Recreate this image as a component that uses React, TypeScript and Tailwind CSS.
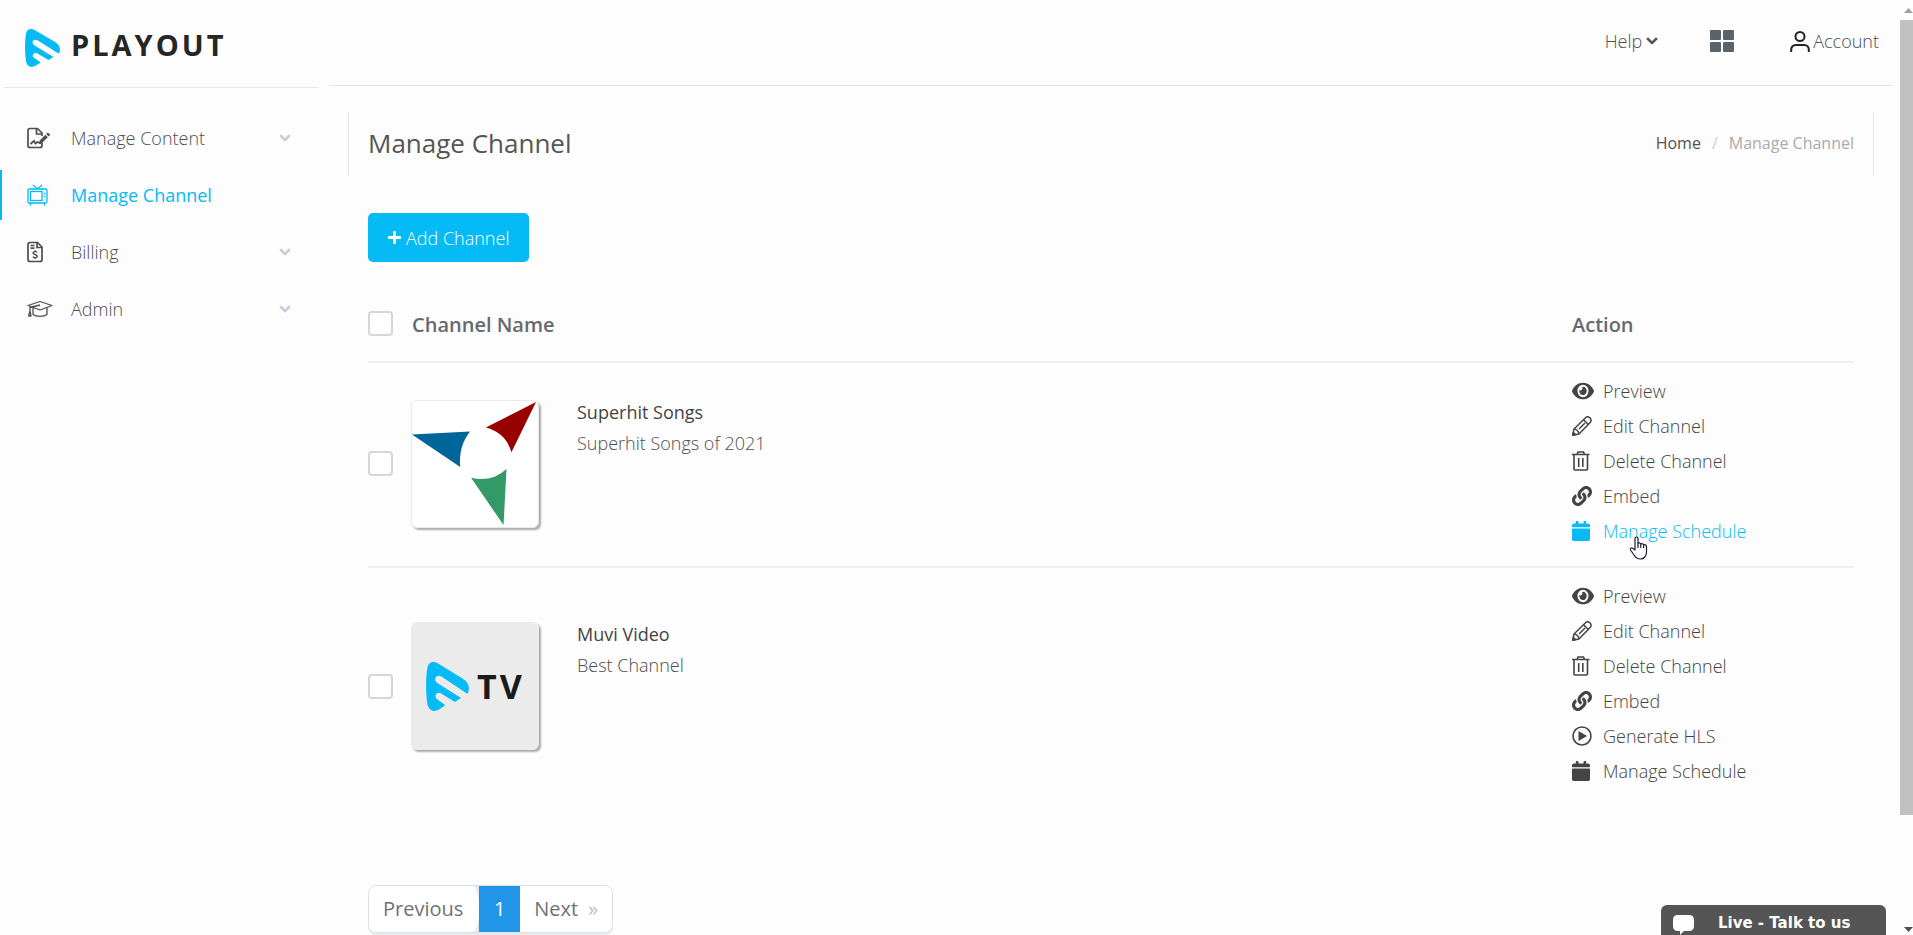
import { ChevronDown } from 'lucide-react'
import type { ReactNode } from 'react'
import { FaCalendar, FaChevronDown, FaEye, FaLink, FaPlus } from 'react-icons/fa'

type IconProps = { className?: string }

type Channel = {
  name: string
  description: string
  logo: ReactNode
  hls: boolean
  active?: string
}

function BrandMark({ className }: IconProps) {
  return (
    <svg className={className} viewBox="0 0 35 38" preserveAspectRatio="none" aria-hidden>
      <path
        d="M1.2 4C2.5-.5 6.500-.8 10.500 1.500L30 13C35 16 36 20 34 24.500L33 24.300 12.500 11.300C8.500 9 5.500 13.500 9.200 16.200L28.500 28 23.500 31 12 24.300C8.500 22.500 6 27 9.300 29L15.800 33.500 10.500 36.800C6.500 39 2.500 38 1.200 33 -.3 25-.3 11 1.200 4Z"
        fill="#05baf5"
      />
    </svg>
  )
}

function ContentIcon({ className }: IconProps) {
  return (
    <svg className={className} viewBox="0 0 24 22" fill="none" stroke="currentColor" strokeWidth="1.700" aria-hidden>
      <path d="M15 15.500V18.500a2 2 0 0 1-2 2H3a2 2 0 0 1-2-2V3.500a2 2 0 0 1 2-2H10.500L15 6V9" />
      <path d="M9.500 1.500V7H15" />
      <path d="M3.500 17 7 13.800 8.500 16.500 10.500 15 14 16.500" />
      <path d="M11.800 17 12.800 13.500 18.300 7.800 20.800 10.200 15.200 15.800Z" fill="currentColor" stroke="none" />
      <path d="M19.200 7 20.800 5.500 23.300 7.800 21.700 9.400Z" fill="currentColor" stroke="none" />
    </svg>
  )
}

function TvIcon({ className }: IconProps) {
  return (
    <svg className={className} viewBox="0 0 24 22" fill="none" stroke="currentColor" strokeWidth="1.300" aria-hidden>
      <rect x="1" y="5" width="19" height="14" rx="1.500" />
      <rect x="3.500" y="7.500" width="11.500" height="9" />
      <path d="M6 1 10.500 5 15 1M3.500 19V21.500M17.500 19V21.500M17 9.500h1.500M17 12.500h1.500" />
    </svg>
  )
}

function BillingIcon({ className }: IconProps) {
  return (
    <svg className={className} viewBox="0 0 24 22" fill="none" stroke="currentColor" strokeWidth="1.700" aria-hidden>
      <path d="M3 1.500H10.500L15 6V18.500a2 2 0 0 1-2 2H3a2 2 0 0 1-2-2V3.500a2 2 0 0 1 2-2Z" />
      <path d="M10 1.500V6.500H15M3.500 4.500H7.500M3.500 7.200H7.500" />
      <path
        d="M10.200 11.300C9 10.300 6 10.300 6 12S10.300 13.300 10.300 15.200 7 16.900 5.800 15.700M8 9.300V10.700M8 16.500V18"
        strokeWidth="1.400"
      />
    </svg>
  )
}

function AdminIcon({ className }: IconProps) {
  return (
    <svg
      className={className}
      viewBox="0 0 26 18"
      fill="none"
      stroke="currentColor"
      strokeWidth="1.300"
      strokeLinejoin="round"
      aria-hidden
    >
      <path d="M1 5.500 13 1.500 25 5.500 13 10 1 5.500Z" />
      <path d="M6 7.500V14.500C9 17 17 17 20 14.500V7.500M13 5 3 7.500V11M3 11 1.500 16H4Z" />
    </svg>
  )
}

function UserIcon({ className }: IconProps) {
  return (
    <svg className={className} viewBox="0 0 20 21" fill="none" stroke="#222" strokeWidth="2" aria-hidden>
      <circle cx="10" cy="5.500" r="4.500" />
      <path d="M1.200 21V18.500a4.500 4.500 0 0 1 4.500-4.500H14.300a4.500 4.500 0 0 1 4.500 4.500V21" />
    </svg>
  )
}

function TrashIcon({ className }: IconProps) {
  return (
    <svg className={className} viewBox="0 0 18 20" fill="none" stroke="currentColor" strokeWidth="1.600" aria-hidden>
      <path d="M0 3.500H17.500M5 3.500 6 1H11.500L12.500 3.500M2 3.500V18a1 1 0 0 0 1 1H14.500a1 1 0 0 0 1-1V3.500M6.700 7V16M10.800 7V16" />
    </svg>
  )
}

function HlsIcon({ className }: IconProps) {
  return (
    <svg className={className} viewBox="0 0 20 20" aria-hidden>
      <circle cx="10" cy="10" r="9" fill="none" stroke="currentColor" strokeWidth="1.600" />
      <path d="M6.500 5 15 10 6.500 15Z" fill="currentColor" />
    </svg>
  )
}

function PencilIcon({ className }: IconProps) {
  return (
    <svg
      className={className}
      viewBox="0 0 20 20"
      fill="none"
      stroke="currentColor"
      strokeWidth="1.500"
      strokeLinejoin="round"
      aria-hidden
    >
      <path d="M.8 19.200 2 13 13.500 1.700C15 .3 16.500.5 17.800 1.800S19.500 5 18.200 6.400L7 18 .8 19.200Z" />
      <path d="M2 13C4 12.800 7 15.500 7 18M11.500 3.700 16.300 8.500M7 13 13 7" />
      <path d="M.8 19.200 1.400 16.500 3.500 18.600Z" fill="currentColor" />
    </svg>
  )
}

function HandCursor() {
  return (
    <svg
      className="pointer-events-none absolute top-[23px] left-[57px] h-6 w-[19px]"
      viewBox="0 0 19 24"
      fill="#fff"
      stroke="#1c1c2c"
      strokeWidth="1.200"
      strokeLinejoin="round"
      aria-hidden
    >
      <path d="M6 14V2.500a1.500 1.500 0 0 1 3 0V7.500C10 6.500 11.500 7 11.800 8 13 7.300 14.300 7.700 14.600 8.900 16 8.300 17.500 9 17.500 10.500V16C17.500 20 15 23 11.500 23 8 23 6.500 21.500 5 19L1.500 14C.8 12.500 2.500 11.300 4 12.500Z" />
      <path d="M9 7.500V12M11.800 8V12M14.600 9V12" fill="none" />
    </svg>
  )
}

function StarLogo() {
  return (
    <svg className="size-full" viewBox="0 0 128 128" aria-hidden>
      <path d="M126 1 75 27Q95 32 101 52Z" fill="#900" />
      <path d="M0 34 59 31Q47 46 49 67Z" fill="#069" />
      <path d="M60 78Q81 83 96 69L93 126Z" fill="#396" />
    </svg>
  )
}

function TvLogo() {
  return (
    <div className="flex size-full items-center gap-2 bg-[#ebebeb] pl-[14px]">
      <BrandMark className="h-[49px] w-[43px] shrink-0" />
      <span className="text-[34px] font-bold tracking-[3px] text-[#1a1a1a]">TV</span>
    </div>
  )
}

const menu = [
  { label: 'Manage Content', Icon: ContentIcon, expandable: true, active: false },
  { label: 'Manage Channel', Icon: TvIcon, expandable: false, active: true },
  { label: 'Billing', Icon: BillingIcon, expandable: true, active: false },
  { label: 'Admin', Icon: AdminIcon, expandable: true, active: false },
]

const actions = [
  { label: 'Preview', Icon: FaEye, size: 'size-[22px]' },
  { label: 'Edit Channel', Icon: PencilIcon, size: 'size-5' },
  { label: 'Delete Channel', Icon: TrashIcon, size: 'h-5 w-[18px]' },
  { label: 'Embed', Icon: FaLink, size: 'size-5' },
  { label: 'Generate HLS', Icon: HlsIcon, size: 'size-5' },
  { label: 'Manage Schedule', Icon: FaCalendar, size: 'h-5 w-[18px]' },
]

const channels: Channel[] = [
  {
    name: 'Superhit Songs',
    description: 'Superhit Songs of 2021',
    logo: <StarLogo />,
    hls: false,
    active: 'Manage Schedule',
  },
  { name: 'Muvi Video', description: 'Best Channel', logo: <TvLogo />, hls: true },
]

function Checkbox({ label }: { label: string }) {
  return (
    <input
      type="checkbox"
      aria-label={label}
      className="block size-[25px] appearance-none rounded border-2 border-[#d6d6d6] bg-white checked:bg-[#05baf5]"
    />
  )
}

function Sidebar() {
  return (
    <aside className="w-[329px] shrink-0">
      <div className="mr-[10px] ml-1 flex h-[88px] items-center gap-[11px] border-b border-[#e9e9e9] pt-[2px] pl-[21px]">
        <BrandMark className="mt-[6px] h-[38px] w-[35px]" />
        <span className="text-[29px] leading-10 font-bold tracking-[3px] text-[#262626]">PLAYOUT</span>
      </div>
      <nav className="mt-[25px] flex flex-col gap-[7px]">
        {menu.map(({ label, Icon, expandable, active }) => (
          <a
            key={label}
            href="#"
            className={`flex h-[50px] items-center border-l-2 pr-9 pl-[25px] ${
              active ? 'border-[#05baf5] font-medium text-[#05baf5]' : 'border-transparent font-light text-[#4c4e52]'
            }`}
          >
            <span className="w-11 shrink-0">
              <Icon className={label === 'Admin' ? 'h-[18px] w-[26px]' : 'h-[22px] w-6'} />
            </span>
            <span className="flex-1">{label}</span>
            {expandable ? <ChevronDown className="size-4 text-[#c5d0dd]" strokeWidth={4} aria-hidden /> : null}
          </a>
        ))}
      </nav>
    </aside>
  )
}

function TopBar() {
  return (
    <header className="mr-[7px] flex h-[86px] items-center justify-end border-b border-[#e9e9e9] pr-[14px] pb-1 font-light text-[#4c4e52]">
      <button type="button" className="flex items-center gap-1">
        Help
        <FaChevronDown className="size-3" stroke="currentColor" strokeWidth={40} aria-hidden />
      </button>
      <button type="button" aria-label="Apps" className="ml-[52px] grid grid-cols-2 gap-[2px] text-[#58636a]">
        <span className="h-[10px] w-[11px] rounded-[1px] bg-current" />
        <span className="h-[10px] w-[11px] rounded-[1px] bg-current" />
        <span className="h-[10px] w-[11px] rounded-[1px] bg-current" />
        <span className="h-[10px] w-[11px] rounded-[1px] bg-current" />
      </button>
      <button type="button" className="ml-14 flex items-center gap-[3px]">
        <UserIcon className="mt-[2px] h-[21px] w-5" />
        Account
      </button>
    </header>
  )
}

function ChannelRow({ channel }: { channel: Channel }) {
  const items = actions.filter((action) => channel.hls || action.label !== 'Generate HLS')

  return (
    <tr className="border-t-2 border-[#f0f0f0]">
      <td className="w-[43px] pb-[2px] align-middle">
        <Checkbox label={`Select ${channel.name}`} />
      </td>
      <td className="pb-[2px] align-middle">
        <div className="flex gap-[38px]">
          <div className="size-32 shrink-0 overflow-hidden rounded-md border border-[#e9e9e9] bg-white shadow-[2px_2px_2px_#aaa]">
            {channel.logo}
          </div>
          <div>
            <p className="leading-6 font-medium text-[#444]">{channel.name}</p>
            <p className="mt-1 leading-[30px] font-light text-[#4c4e52]">{channel.description}</p>
          </div>
        </div>
      </td>
      <td className="w-[282px] pt-[10px] pb-[18px] align-top">
        <ul>
          {items.map(({ label, Icon, size }) => (
            <li key={label} className="relative">
              <a
                href="#"
                className={`flex h-[35px] items-center font-light ${
                  label === channel.active ? 'text-[#05baf5]' : 'text-[#444]'
                }`}
              >
                <span className="w-[31px] shrink-0">
                  <Icon className={size} preserveAspectRatio="none" aria-hidden />
                </span>
                {label}
              </a>
              {label === channel.active ? <HandCursor /> : null}
            </li>
          ))}
        </ul>
      </td>
    </tr>
  )
}

function Pagination() {
  return (
    <nav
      aria-label="Pagination"
      className="mt-[79px] inline-flex h-12 items-stretch overflow-hidden rounded-lg border border-[#dbe1e6] bg-white text-[20px] text-[#6f7174] shadow-[0_2px_0_#e9eaeb]"
    >
      <span className="flex bg-[#e4e8ec]">
        <button type="button" className="rounded-r-[6px_50%] bg-white pr-4 pl-[14px]">
          Previous
        </button>
      </span>
      <button type="button" aria-current="page" className="w-[41px] bg-[#2196e8] text-white">
        1
      </button>
      <button type="button" className="flex items-center gap-[10px] px-[14px]">
        Next <span className="text-[#bbb]">»</span>
      </button>
    </nav>
  )
}

function ChatWidget() {
  return (
    <button
      type="button"
      className="fixed right-[27px] bottom-0 flex h-[30px] w-[225px] items-start gap-6 rounded-t-md bg-[#555] pt-2 pl-3 font-['DejaVu_Sans',sans-serif] text-[15px] leading-5 font-bold text-white"
    >
      <svg className="mt-[2px] h-5 w-[21px] shrink-0" viewBox="0 0 21 20" fill="currentColor" aria-hidden>
        <path d="M5 0H16Q21 0 21 5V11Q21 16 16 16H11L7 20V16H5Q0 16 0 11V5Q0 0 5 0Z" />
      </svg>
      Live - Talk to us
    </button>
  )
}

function ScrollRail() {
  return (
    <div className="fixed inset-y-0 right-0 flex w-[13px] flex-col items-end bg-[#fdfdfd]" aria-hidden>
      <svg className="mt-2 h-[5px] w-[9px] shrink-0" viewBox="0 0 9 5" fill="#a3a3a3">
        <path d="M0 5 4.500 0 9 5Z" />
      </svg>
      <div className="mt-[7px] h-[85%] w-full bg-[#c1c1c1]" />
      <svg className="mt-auto mb-[3px] h-[5px] w-[9px] shrink-0" viewBox="0 0 9 5" fill="#505050">
        <path d="M0 0H9L4.500 5Z" />
      </svg>
    </div>
  )
}

export default function App() {
  return (
    <div className="flex min-h-screen bg-[#fdfdfd] pr-[13px] font-['Open_Sans',sans-serif] text-lg leading-7">
      <Sidebar />
      <div className="min-w-0 flex-1">
        <TopBar />
        <main className="mt-[26px] mr-[26px] ml-[19px]">
          <div className="flex h-16 items-center justify-between border-x border-[#e5e5e5] px-[19px] pb-[2px]">
            <h1 className="text-[26px] font-medium text-[#555]">Manage Channel</h1>
            <nav aria-label="Breadcrumb" className="flex gap-[11px] text-base">
              <a href="#" className="text-[#505050]">
                Home
              </a>
              <span className="text-[#ccc]">/</span>
              <span className="text-[#aaa]">Manage Channel</span>
            </nav>
          </div>
          <div className="mx-5 mt-[37px]">
            <button
              type="button"
              className="flex h-[49px] items-center gap-1 rounded-[5px] bg-[#05baf5] pr-5 pl-[19px] text-white"
            >
              <FaPlus className="size-[15px]" aria-hidden />
              <span className="font-light">Add Channel</span>
            </button>
            <table className="mt-9 w-full border-collapse text-left">
              <thead>
                <tr className="h-16 text-[#666a6d]">
                  <th className="pb-3">
                    <Checkbox label="Select all channels" />
                  </th>
                  <th className="pb-[10px] pl-[1px] text-[20px] font-semibold">Channel Name</th>
                  <th className="pb-[10px] text-[20px] font-semibold">Action</th>
                </tr>
              </thead>
              <tbody>
                {channels.map((channel) => (
                  <ChannelRow key={channel.name} channel={channel} />
                ))}
              </tbody>
            </table>
            <Pagination />
          </div>
        </main>
      </div>
      <ChatWidget />
      <ScrollRail />
    </div>
  )
}
